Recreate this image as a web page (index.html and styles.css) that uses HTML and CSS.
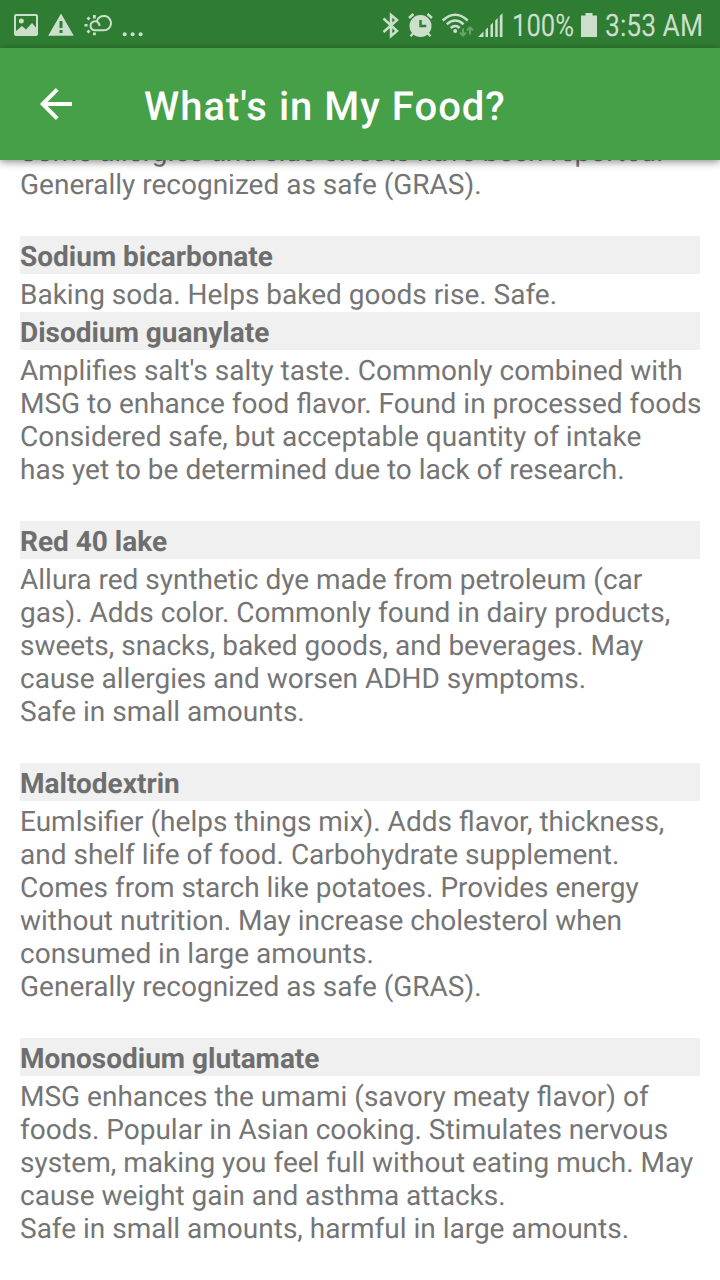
FILE: index.html
```html
<!DOCTYPE html>
<html lang="en">
<head>
    <meta charset="UTF-8">
    <meta name="viewport" content="width=device-width, initial-scale=1.0">
    <title>What's in My Food?</title>
    <link rel="stylesheet" href="styles.css">
</head>
<body>
    <div class="status-bar">
        <div class="status-left">
            <!-- picture, warning, weather, more -->
            <svg width="24" height="48" viewBox="14 0 24 48">
                <path fill-rule="evenodd" d="M16 14h20q2 0 2 2v18q0 2-2 2H16q-2 0-2-2V16q0-2 2-2zM16 16v15l6-5 4 3.500 6-6.500 4 4.500V16z"/>
                <circle cx="21.300" cy="21" r="2.500"/>
            </svg>
            <svg width="26" height="48" viewBox="49 0 26 48">
                <path fill-rule="evenodd" d="M62 13.500L74.800 35.700H49.200zM60.500 21v7h3v-7zM60.500 30v3h3v-3z"/>
            </svg>
            <svg width="28" height="48" viewBox="84 0 28 48">
                <path fill="none" stroke="#cbdfcc" stroke-width="2" d="M99.500 26a4.500 4.500 0 1 0-4.500 4.300H103.800a7.200 7.200 0 1 0-6.900-9.300"/>
                <path d="M93 15h2.800v3.500H93zM86.500 18.500l2-2 2 2-2 2zM84.500 24h3v2.600h-3zM86.500 31.500l2-2 2 2-2 2zM93 32.500h2.800v2.700H93z"/>
            </svg>
            <svg width="22" height="48" viewBox="122 0 22 48">
                <circle cx="124.700" cy="34.300" r="2"/>
                <circle cx="132.600" cy="34.300" r="2"/>
                <circle cx="140.600" cy="34.300" r="2"/>
            </svg>
        </div>
        <div class="status-right">
            <svg class="bluetooth" width="17" height="48" viewBox="382 0 17 48">
                <path fill="none" stroke="#cbdfcc" stroke-width="2.500" d="M383.500 18.500L397 31l-6 5V15l6 5-13.500 12"/>
            </svg>
            <svg class="alarm" width="25" height="48" viewBox="408 0 25 48">
                <path fill-rule="evenodd" d="M420.500 15a11 11 0 1 1 0 22a11 11 0 1 1 0-22zM419.300 20v7.200h7v-2.400h-4.500V20z"/>
                <path fill="none" stroke="#cbdfcc" stroke-width="2.400" d="M409 18l4.500-4M432 18l-4.500-4M413.500 33l-3 3.200M427.500 33l3 3.200"/>
            </svg>
            <svg class="wifi" width="32" height="48" viewBox="442 0 32 48">
                <path fill="none" stroke="#cbdfcc" stroke-width="2.500" d="M442.700 20.500q12.500-11.500 25 0M446.800 24.200q8.400-7.500 16.800 0M450.700 28q4.500-4 9 0"/>
                <circle cx="455.200" cy="31" r="2"/>
                <path fill="none" stroke="#69a36c" stroke-width="2" d="M463 28.500v7.300M460 32.500l3 3 3-3M470 34.500V27M467 30.300l3-3 3 3"/>
            </svg>
            <svg class="signal" width="25" height="48" viewBox="477.500 0 25 48">
                <path d="M477.500 37l5.500-5.500V37zM485 29.700l2.500-2.300V37H485zM490 25l2.500-2.500V37H490zM494.700 20.500l2.500-2.500V37h-2.500zM499.300 16l2.700-3v24h-2.700z"/>
            </svg>
            <svg class="percent" width="64" height="48">
                <text x="0" y="36" textLength="62" lengthAdjust="spacingAndGlyphs">100%</text>
            </svg>
            <svg class="battery" width="16" height="48" viewBox="581 0 16 48">
                <path d="M581 15.500h4.500V13h7v2.500h4.500V37h-16z"/>
            </svg>
            <svg class="clock" width="100" height="48">
                <text x="0" y="36" textLength="98" lengthAdjust="spacingAndGlyphs">3:53 AM</text>
            </svg>
        </div>
    </div>

    <div class="app-bar">
        <svg class="back" width="32" height="32" viewBox="0 0 32 32">
            <path fill="none" stroke="#fff" stroke-width="4" d="M32 16H4M17.300 1.400L2.700 16l14.600 14.600"/>
        </svg>
        <h1 class="title">What's in My Food?</h1>
    </div>

    <div class="content">
        <div class="list">
            <p class="info spaced">Some allergies and side effects have been reported.<br>Generally recognized as safe (GRAS).</p>

            <h2 class="name">Sodium bicarbonate</h2>
            <p class="info">Baking soda. Helps baked goods rise. Safe.</p>

            <h2 class="name">Disodium guanylate</h2>
            <p class="info spaced">Amplifies salt's salty taste. Commonly combined with<br>MSG to enhance food flavor. Found in processed foods<br>Considered safe, but acceptable quantity of intake<br>has yet to be determined due to lack of research.</p>

            <h2 class="name">Red 40 lake</h2>
            <p class="info spaced">Allura red synthetic dye made from petroleum (car<br>gas). Adds color. Commonly found in dairy products,<br>sweets, snacks, baked goods, and beverages. May<br>cause allergies and worsen ADHD symptoms.<br>Safe in small amounts.</p>

            <h2 class="name">Maltodextrin</h2>
            <p class="info spaced">Eumlsifier (helps things mix). Adds flavor, thickness,<br>and shelf life of food. Carbohydrate supplement.<br>Comes from starch like potatoes. Provides energy<br>without nutrition. May increase cholesterol when<br>consumed in large amounts.<br>Generally recognized as safe (GRAS).</p>

            <h2 class="name">Monosodium glutamate</h2>
            <p class="info spaced">MSG enhances the umami (savory meaty flavor) of<br>foods. Popular in Asian cooking. Stimulates nervous<br>system, making you feel full without eating much. May<br>cause weight gain and asthma attacks.<br>Safe in small amounts, harmful in large amounts.</p>
        </div>
    </div>
</body>
</html>
```
FILE: styles.css
```css
* {
    box-sizing: border-box;
    margin: 0;
    padding: 0;
}

body {
    display: flex;
    flex-direction: column;
    height: 100vh;
    overflow: hidden;
    background: #fff;
    font-family: Roboto, sans-serif;
    text-rendering: geometricPrecision;
}

svg {
    display: block;
    flex-shrink: 0;
    overflow: visible;
}

.status-bar {
    display: flex;
    justify-content: space-between;
    flex-shrink: 0;
    height: 48px;
    padding: 0 15px 0 14px;
    background: #2f7d33;
    fill: #cbdfcc;
    font-size: 31px;
}

.status-left,
.status-right {
    display: flex;
}

.status-left {
    gap: 10px;
}

.alarm {
    margin-left: 9px;
}

.wifi {
    margin-left: 9px;
}

.signal {
    margin-left: 4px;
}

.percent {
    margin-left: 9px;
}

.battery {
    margin-left: 5px;
}

.clock {
    margin-left: 8px;
}

.app-bar {
    position: relative;
    z-index: 1;
    display: flex;
    align-items: center;
    flex-shrink: 0;
    height: 112px;
    padding-left: 40px;
    background: #45a048;
    box-shadow: 0 2px 8px rgba(0, 0, 0, 0.45);
}

.title {
    margin-left: 72px;
    padding-top: 5px;
    color: #fff;
    font-size: 40px;
    font-weight: 500;
    line-height: 47px;
    letter-spacing: 1px;
    white-space: nowrap;
}

.content {
    flex: 1;
    min-height: 0;
    padding: 0 20px;
}

/* list is scrolled partly under the app bar */
.list {
    margin-top: -29px;
    color: #757575;
    font-size: 28px;
    line-height: 33px;
    white-space: nowrap;
}

.name {
    height: 38px;
    padding-top: 4px;
    background: #f0f0f0;
    color: #6e6e6e;
    font-size: 28px;
    font-weight: 700;
}

.info {
    padding: 4px 0 1px;
}

.info.spaced {
    padding-bottom: 35px;
}
```
